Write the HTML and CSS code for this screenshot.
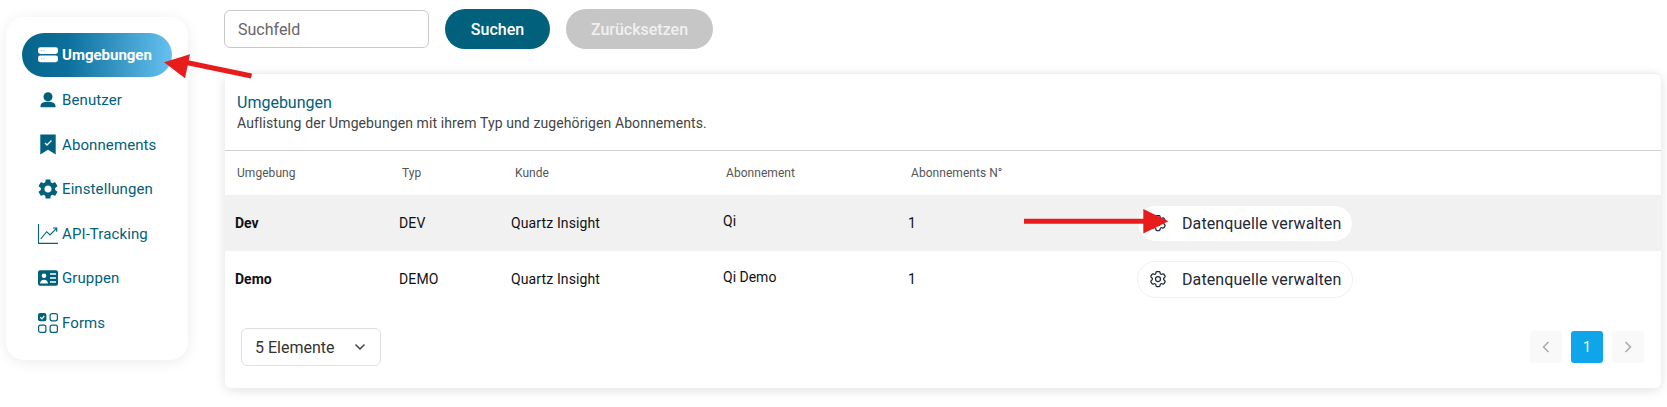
FILE: index.html
```html
<!DOCTYPE html>
<html lang="de">
<head>
<meta charset="utf-8">
<title>Umgebungen</title>
<link rel="stylesheet" href="styles.css">
</head>
<body>
<div class="page">
  <nav class="sidebar">
    <a class="nav-item active">
      <svg class="nav-icon" viewBox="0 0 20 20"><rect x="0" y="2.2" width="20" height="6.700" rx="2.400" fill="#fff"/><rect x="0" y="10.500" width="20" height="6.700" rx="2.400" fill="#fff"/><path d="M3 5.500h1.200M5.400 5.500h1M3 13.800h1.200M5.400 13.800h1" stroke="#7fb3cc" stroke-width=".8"/></svg>
      <span>Umgebungen</span>
    </a>
    <a class="nav-item">
      <svg class="nav-icon" viewBox="0 0 20 20"><circle cx="10" cy="6.700" r="4.500" fill="currentColor"/><path d="M2.500 17.300v-1.300c0-2.900 3.400-4.200 7.500-4.200s7.500 1.300 7.500 4.200v1.300z" fill="currentColor"/></svg>
      <span>Benutzer</span>
    </a>
    <a class="nav-item">
      <svg class="nav-icon" viewBox="0 0 20 20"><path d="M2.300 -.5h15.400v20L10 14.800 2.300 19.500z" fill="currentColor"/><path d="M7 8l2 2L13.500 5.500" fill="none" stroke="#fff" stroke-width="1.300"/></svg>
      <span>Abonnements</span>
    </a>
    <a class="nav-item">
      <svg class="nav-icon" viewBox="2 2 20 20"><path fill="currentColor" d="M19.14 12.94c.04-.3.06-.61.06-.94 0-.32-.02-.64-.07-.94l2.03-1.58c.18-.14.23-.41.12-.61l-1.92-3.32c-.12-.22-.37-.29-.59-.22l-2.39.96c-.5-.38-1.03-.7-1.62-.94l-.36-2.54c-.04-.24-.24-.41-.48-.41h-3.84c-.24 0-.43.17-.47.41l-.36 2.54c-.59.24-1.13.57-1.62.94l-2.39-.96c-.22-.08-.47 0-.59.22L2.74 8.87c-.12.21-.08.47.12.61l2.03 1.58c-.05.3-.09.63-.09.94s.02.64.07.94l-2.03 1.58c-.18.14-.23.41-.12.61l1.92 3.32c.12.22.37.29.59.22l2.39-.96c.5.38 1.03.7 1.62.94l.36 2.54c.05.24.24.41.48.41h3.84c.24 0 .44-.17.47-.41l.36-2.54c.59-.24 1.13-.56 1.62-.94l2.39.96c.22.08.47 0 .59-.22l1.92-3.32c.12-.22.07-.47-.12-.61l-2.01-1.58zM12 15.6c-1.98 0-3.6-1.62-3.6-3.6s1.62-3.6 3.6-3.6 3.6 1.62 3.6 3.6-1.62 3.6-3.6 3.600z"/></svg>
      <span>Einstellungen</span>
    </a>
    <a class="nav-item">
      <svg class="nav-icon" viewBox="0 0 20 20"><path d="M.5 0v19.400H20M2.700 15l6-7.300L12 11l6.500-6.700M15 4h3.700v3.700" fill="none" stroke="currentColor" stroke-width="1.100"/></svg>
      <span>API-Tracking</span>
    </a>
    <a class="nav-item">
      <svg class="nav-icon" viewBox="0 0 20 20"><rect x="0" y="2.300" width="20" height="15.400" rx="2" fill="currentColor"/><circle cx="6" cy="7.800" r="2.300" fill="#fff"/><path d="M2 15.500c0-2.500 1.800-3.800 4-3.800s4 1.300 4 3.800z" fill="#fff"/><path d="M12 6h6M12 10h6M12 14h6" stroke="#fff" stroke-width="1.500"/></svg>
      <span>Gruppen</span>
    </a>
    <a class="nav-item">
      <svg class="nav-icon" viewBox="0 0 20 20"><rect x="0" y="0" width="8.400" height="8.200" rx="2" fill="currentColor"/><path d="M2.200 4.200l1.800 1.700 2.300-3" fill="none" stroke="#fff" stroke-width="1.200"/><rect x="12.100" y=".6" width="7.300" height="7.200" rx="2" fill="none" stroke="currentColor" stroke-width="1.200"/><rect x=".6" y="12.100" width="7.300" height="7.300" rx="2" fill="none" stroke="currentColor" stroke-width="1.200"/><rect x="12.100" y="12.100" width="7.300" height="7.300" rx="2" fill="none" stroke="currentColor" stroke-width="1.200"/></svg>
      <span>Forms</span>
    </a>
  </nav>

  <main class="main">
    <div class="toolbar">
      <input class="search" type="text" placeholder="Suchfeld">
      <button class="btn btn-primary">Suchen</button>
      <button class="btn btn-disabled">Zurücksetzen</button>
    </div>

    <section class="card">
      <header class="card-head">
        <h2 class="card-title">Umgebungen</h2>
        <p class="card-sub">Auflistung der Umgebungen mit ihrem Typ und zugehörigen Abonnements.</p>
      </header>
      <table class="table">
        <colgroup>
          <col class="c1"><col class="c2"><col class="c3"><col class="c4"><col class="c5"><col>
        </colgroup>
        <thead>
          <tr><th>Umgebung</th><th>Typ</th><th class="th-kunde">Kunde</th><th>Abonnement</th><th>Abonnements N°</th><th></th></tr>
        </thead>
        <tbody>
          <tr class="hover">
            <td class="strong">Dev</td><td>DEV</td><td>Quartz Insight</td><td class="sub">Qi</td><td>1</td>
            <td><button class="manage"><svg class="gear" viewBox="0 0 24 24"><path d="M9.594 3.940c.09-.542.56-.94 1.110-.94h2.593c.55 0 1.020.398 1.110.94l.213 1.281c.063.374.313.686.645.870.074.040.147.083.220.127.325.196.720.257 1.075.124l1.217-.456a1.125 1.125 0 0 1 1.370.490l1.296 2.247a1.125 1.125 0 0 1-.260 1.431l-1.003.827c-.293.241-.438.613-.430.992a7.723 7.723 0 0 1 0 .255c-.008.378.137.750.430.991l1.004.827c.424.350.534.955.260 1.430l-1.298 2.247a1.125 1.125 0 0 1-1.369.491l-1.217-.456c-.355-.133-.750-.072-1.076.124a6.470 6.470 0 0 1-.220.128c-.331.183-.581.495-.644.869l-.213 1.281c-.090.543-.560.940-1.110.940h-2.594c-.550 0-1.019-.398-1.110-.940l-.213-1.281c-.062-.374-.312-.686-.644-.870a6.520 6.520 0 0 1-.220-.127c-.325-.196-.720-.257-1.076-.124l-1.217.456a1.125 1.125 0 0 1-1.369-.490l-1.297-2.247a1.125 1.125 0 0 1 .260-1.431l1.004-.827c.292-.240.437-.613.430-.991a6.932 6.932 0 0 1 0-.255c.007-.380-.138-.751-.430-.992l-1.004-.827a1.125 1.125 0 0 1-.260-1.430l1.297-2.247a1.125 1.125 0 0 1 1.370-.491l1.216.456c.356.133.751.072 1.076-.124.072-.044.146-.086.220-.128.332-.183.582-.495.644-.869l.214-1.280Z"/><circle cx="12" cy="12" r="3"/></svg>Datenquelle verwalten</button></td>
          </tr>
          <tr>
            <td class="strong">Demo</td><td>DEMO</td><td>Quartz Insight</td><td class="sub">Qi Demo</td><td>1</td>
            <td><button class="manage"><svg class="gear" viewBox="0 0 24 24"><path d="M9.594 3.940c.09-.542.56-.94 1.110-.94h2.593c.55 0 1.020.398 1.110.94l.213 1.281c.063.374.313.686.645.870.074.040.147.083.220.127.325.196.720.257 1.075.124l1.217-.456a1.125 1.125 0 0 1 1.370.490l1.296 2.247a1.125 1.125 0 0 1-.260 1.431l-1.003.827c-.293.241-.438.613-.430.992a7.723 7.723 0 0 1 0 .255c-.008.378.137.750.430.991l1.004.827c.424.350.534.955.260 1.430l-1.298 2.247a1.125 1.125 0 0 1-1.369.491l-1.217-.456c-.355-.133-.750-.072-1.076.124a6.470 6.470 0 0 1-.220.128c-.331.183-.581.495-.644.869l-.213 1.281c-.090.543-.560.940-1.110.940h-2.594c-.550 0-1.019-.398-1.110-.940l-.213-1.281c-.062-.374-.312-.686-.644-.870a6.520 6.520 0 0 1-.220-.127c-.325-.196-.720-.257-1.076-.124l-1.217.456a1.125 1.125 0 0 1-1.369-.490l-1.297-2.247a1.125 1.125 0 0 1 .260-1.431l1.004-.827c.292-.240.437-.613.430-.991a6.932 6.932 0 0 1 0-.255c.007-.380-.138-.751-.430-.992l-1.004-.827a1.125 1.125 0 0 1-.260-1.430l1.297-2.247a1.125 1.125 0 0 1 1.370-.491l1.216.456c.356.133.751.072 1.076-.124.072-.044.146-.086.220-.128.332-.183.582-.495.644-.869l.214-1.280Z"/><circle cx="12" cy="12" r="3"/></svg>Datenquelle verwalten</button></td>
          </tr>
        </tbody>
      </table>
      <footer class="card-foot">
        <div class="page-size">
          <span>5 Elemente</span>
          <svg class="chev" viewBox="0 0 12 8"><path d="M1.500 1.500L6 6l4.500-4.500"/></svg>
        </div>
        <div class="pager">
          <span class="pg"><svg viewBox="0 0 8 12"><path d="M6.500 1L1.500 6l5 5"/></svg></span>
          <span class="pg current">1</span>
          <span class="pg"><svg viewBox="0 0 8 12"><path d="M1.500 1l5 5-5 5"/></svg></span>
        </div>
      </footer>
    </section>
  </main>
</div>

<svg class="overlay" viewBox="0 0 1667 407" aria-hidden="true">
  <path d="M251.500 76L184 62" stroke="#e81c1c" stroke-width="5" fill="none"/>
  <path d="M164 62.300L190 54.300 185 78.300z" fill="#e81c1c"/>
  <path d="M1024 221.300H1148" stroke="#e81c1c" stroke-width="5" fill="none"/>
  <path d="M1143.300 209L1168.500 221.300 1143.300 233.500z" fill="#e81c1c"/>
</svg>
</body>
</html>
```
FILE: styles.css
```css
* { box-sizing: border-box; }
html, body { margin: 0; padding: 0; background: #fff; }
body { font-family: Roboto, "Liberation Sans", sans-serif; width: 1667px; height: 407px; overflow: hidden; position: relative; }

.page { display: flex; align-items: flex-start; padding-left: 6px; }

/* Sidebar */
.sidebar {
  width: 182px; height: 343px; margin-top: 17px; padding: 16px 16px 0;
  background: #fff; border-radius: 18px;
  box-shadow: 0 2px 14px rgba(0, 0, 0, .08);
  display: flex; flex-direction: column; flex-shrink: 0;
}
.nav-item {
  height: 44.6px; flex-shrink: 0; display: flex; align-items: center; gap: 4px; padding-left: 16px;
  color: #01607c; font-size: 15px; letter-spacing: .1px; border-radius: 22px;
}
.nav-item.active {
  height: 44px; margin-bottom: .8px; color: #fff; font-weight: 700; letter-spacing: 0;
  background: linear-gradient(90deg, #05648a 0%, #0c6f9b 30%, #65c1f0 100%);
}
.nav-icon { width: 20px; height: 20px; flex-shrink: 0; overflow: visible; }

/* Main column */
.main { width: 1436px; margin-left: 37px; display: flex; flex-direction: column; }
.toolbar { display: flex; align-items: flex-start; gap: 16px; padding-top: 9px; height: 73px; }
.search {
  width: 205px; height: 38px; margin-top: 1px; margin-left: -1px; padding: 0 13px;
  border: 1px solid #c9c9c9; border-radius: 6px; font: 16px Roboto, sans-serif; outline: none; background: #fff;
}
.search::placeholder { color: #666; opacity: 1; }
.btn { height: 40px; border: 0; border-radius: 20px; font: 500 16px Roboto, sans-serif; color: #fff; }
.btn-primary { width: 105px; background: #01607c; }
.btn-disabled { width: 147px; background: #c6c6c6; color: #f0f0f0; }

/* Card */
.card {
  height: 315px; background: #fff; border-radius: 6px; border-top: 1px solid #ececec;
  box-shadow: 0 2px 12px rgba(0, 0, 0, .12);
}
.card-head { height: 77px; padding: 19px 12px 0; border-bottom: 1px solid #cfcfcf; }
.card-title { margin: 0; font-size: 16px; font-weight: 400; line-height: 19px; color: #01607c; }
.card-sub { margin: 2px 0 0; font-size: 14px; line-height: 19px; color: #444; letter-spacing: .1px; }

.table { width: 100%; border-collapse: collapse; table-layout: fixed; }
.c1 { width: 165px; } .c2 { width: 112px; } .c3 { width: 212px; } .c4 { width: 185px; } .c5 { width: 229px; }
.table th { height: 44px; padding: 0 0 0 12px; text-align: left; font-size: 12px; font-weight: 400; color: #555; letter-spacing: .05px; }
.table th.th-kunde { padding-left: 13px; }
.table td { height: 56px; padding: 0 0 0 9px; font-size: 14px; color: #111; letter-spacing: .12px; }
.table tr.hover td { background: #f1f1f1; }
.table td.strong { font-weight: 700; letter-spacing: 0; padding-left: 10px; }
.table td.sub { padding-bottom: 4px; letter-spacing: 0; }
.manage {
  display: flex; align-items: center; gap: 14px; width: 216px; height: 37px; padding: 0 0 0 10px;
  background: #fff; border: 1px solid #f0f0f0; border-radius: 19px;
  font: 16px Roboto, sans-serif; letter-spacing: .1px; color: #1f2937;
}
.gear { width: 20px; height: 20px; fill: none; stroke: #1f2937; stroke-width: 1.5; flex-shrink: 0; }

.card-foot { display: flex; justify-content: space-between; align-items: center; padding: 21px 17px 0 16px; }
.page-size {
  width: 140px; height: 38px; display: flex; align-items: center; justify-content: space-between; padding: 0 14px 0 13px;
  border: 1px solid #e0e0e0; border-radius: 6px; font-size: 16px; color: #333;
}
.chev { width: 12px; height: 8px; fill: none; stroke: #444; stroke-width: 1.5; }
.pager { display: flex; gap: 9px; }
.pg {
  width: 32px; height: 32px; display: flex; align-items: center; justify-content: center;
  background: #f9f9f9; border-radius: 3px; font-size: 14px;
}
.pg svg { width: 8px; height: 12px; fill: none; stroke: #aaa; stroke-width: 1.5; }
.pg.current { background: #0ea5e9; color: #fff; }

/* Annotation arrows over the screenshot */
.overlay { position: absolute; left: 0; top: 0; width: 1667px; height: 407px; pointer-events: none; }
```
